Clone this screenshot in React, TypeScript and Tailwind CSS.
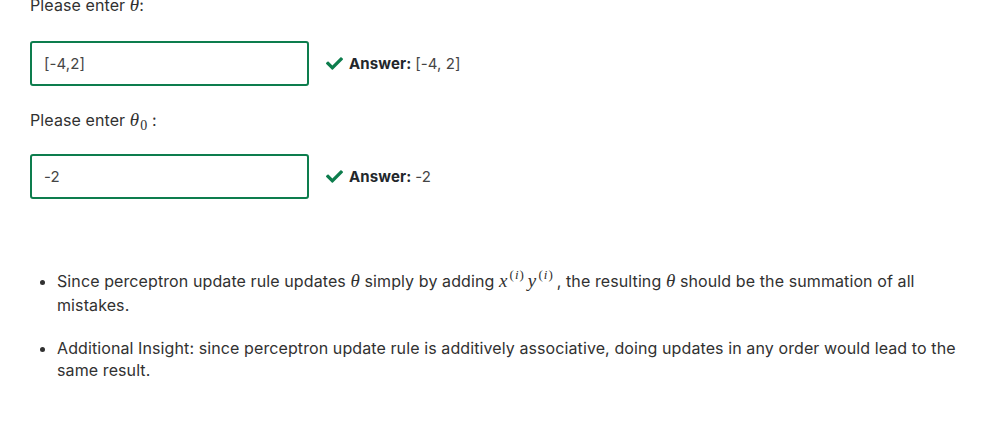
import React from "react";
import { FaCheck } from "react-icons/fa";

const serif = { fontFamily: '"Liberation Serif", "DejaVu Serif", serif' };

const Theta = ({ sub }: { sub?: string }) => (
  <span style={serif}>
    <span className="italic text-[19px]">θ</span>
    {sub ? <span className="relative top-[4px] text-[14px] ml-[1px]">{sub}</span> : null}
  </span>
);

const MathSup = ({ base }: { base: string }) => (
  <span style={serif}>
    <span className="italic text-[19px]">{base}</span>
    <span className="relative top-[-8px] text-[13px] ml-[2px] mr-[3px] tracking-[1px]">
      (<span className="italic">i</span>)
    </span>
  </span>
);

const Row = ({ value, answer }: { value: string; answer: string }) => (
  <div className="flex items-center">
    <div className="w-[279px] h-[45px] border-2 border-[#0d7d4d] rounded-[3px] flex items-center pl-[12px] text-[15px] text-[#454545]">
      {value}
    </div>
    <div className="flex items-center ml-[17px] text-[15px]">
      <FaCheck className="text-[#0d7d4d] w-[17px] h-[17px]" />
      <span className="ml-[6px] font-bold text-[#23272b]">Answer:</span>
      <span className="ml-[4px] text-[#454545]">{answer}</span>
    </div>
  </div>
);

export default function App() {
  return (
    <div
      className="w-[984px] h-[424px] overflow-hidden bg-white pl-[30px] pr-[19px] text-[16px] leading-[22px] text-[#313131] tracking-[0.1px]"
      style={{ fontFamily: "Inter, 'Noto Sans', sans-serif" }}
    >
      <p className="mt-[-6px]">
        Please enter <Theta />:
      </p>
      <div className="mt-[24px]">
        <Row value="[-4,2]" answer="[-4, 2]" />
      </div>
      <p className="mt-[23px]">
        Please enter <Theta sub="0" />
        {"  "}:
      </p>
      <div className="mt-[21px]">
        <Row value="-2" answer="-2" />
      </div>
      <ul className="mt-[71px] list-disc pl-[27px]">
        <li>
          Since perceptron update rule updates <Theta /> simply by adding <MathSup base="x" />
          <MathSup base="y" />, the resulting <Theta /> should be the summation of all mistakes.
        </li>
        <li className="mt-[21px]">
          Additional Insight: since perceptron update rule is additively associative, doing updates in any order would
          lead to the same result.
        </li>
      </ul>
    </div>
  );
}
